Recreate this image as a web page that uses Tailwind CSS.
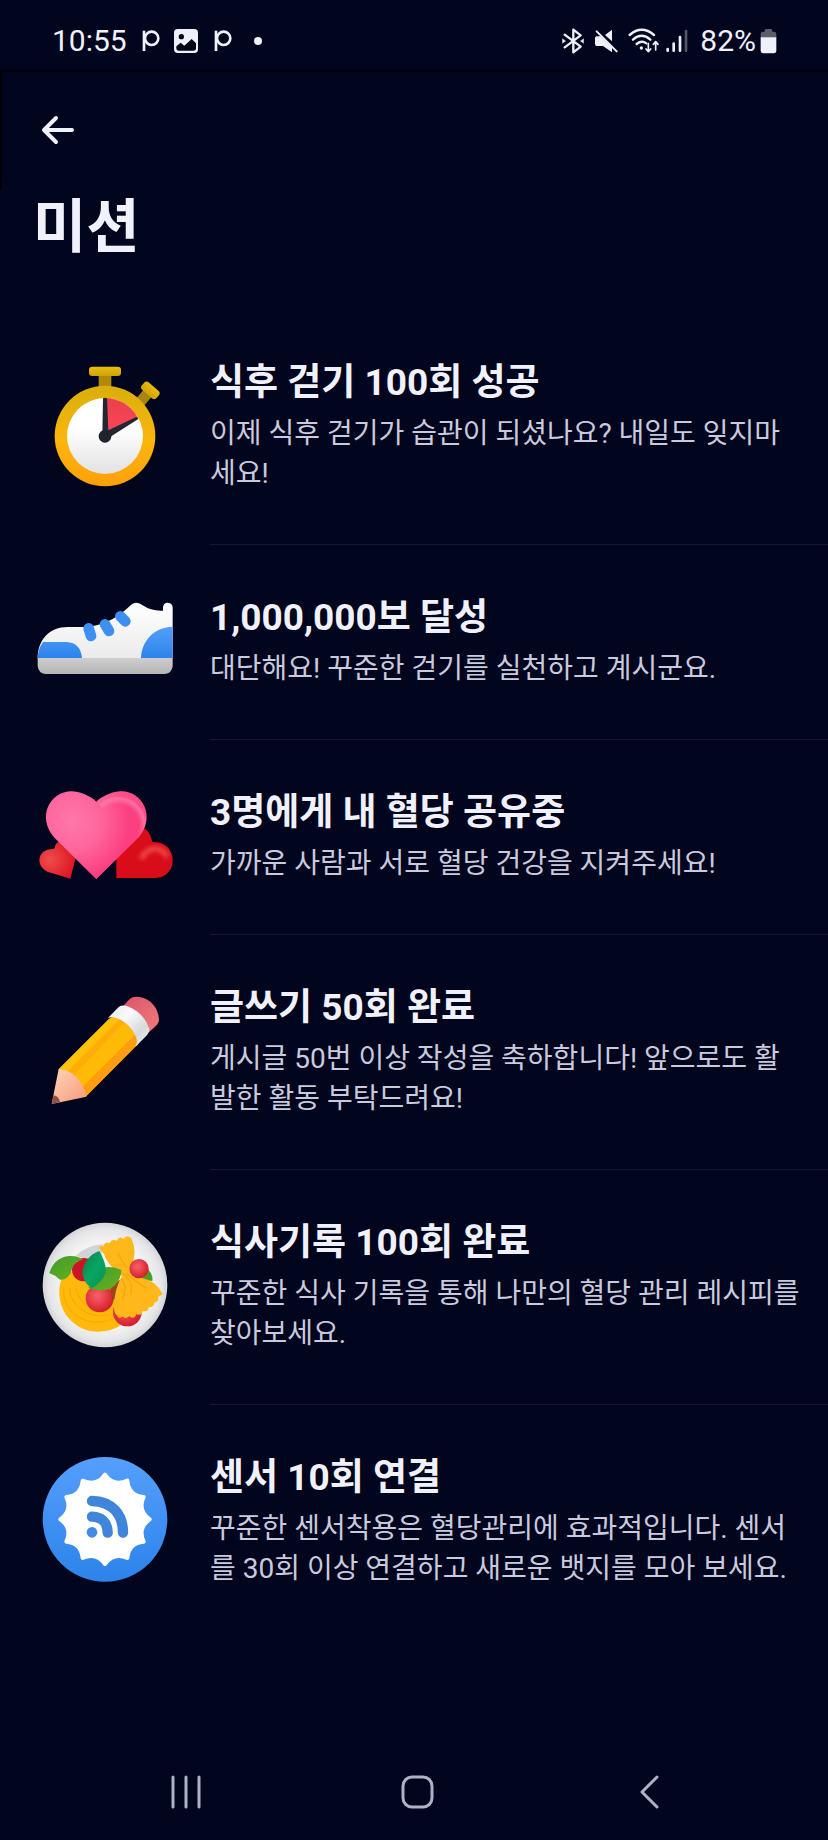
<!DOCTYPE html>
<html lang="ko">
<head>
<meta charset="utf-8">
<meta name="viewport" content="width=device-width, initial-scale=1">
<title>미션</title>
<script src="https://cdn.jsdelivr.net/npm/@tailwindcss/browser@4"></script>
</head>
<body class="flex min-h-screen flex-col bg-[#01051d] font-['Roboto','Noto_Sans_CJK_KR',sans-serif] text-[#f0f1fb]">

<!-- Status bar -->
<div class="flex h-[72px] items-center justify-between border-b-2 border-[#000009] bg-[#01051d] pt-3 pr-[51px] pl-[52px]">
  <div class="flex items-center">
    <span class="w-[90px] text-[30px] leading-8">10:55</span>
    <svg class="h-6 w-[18px]" viewBox="0 0 54 72" fill="none" stroke="#eef0fa" stroke-width="8"><path d="M6 5V66"/><circle cx="29" cy="28" r="20"/></svg>
    <svg class="ml-3.5 size-6" viewBox="0 0 72 72"><rect width="72" height="72" rx="11" fill="#eef0fa"/><path d="M7 52L20 41L31 50L53 30L66 43V57Q66 65 58 65H15Q7 65 7 57Z" fill="#000619"/><circle cx="22" cy="23" r="8" fill="#000619"/></svg>
    <svg class="ml-4 h-6 w-[18px]" viewBox="0 0 54 72" fill="none" stroke="#eef0fa" stroke-width="8"><path d="M6 5V66"/><circle cx="29" cy="28" r="20"/></svg>
    <span class="ml-[22px] size-2 rounded-full bg-[#eef0fa]"></span>
  </div>
  <div class="flex items-center">
    <svg class="h-[26px] w-[22px]" viewBox="0 0 66 78" fill="none" stroke="#eef0fa" stroke-width="7" stroke-linejoin="round" stroke-linecap="round"><path d="M8 20L56 56L34 73V5L56 22L8 58"/><path d="M1 32L11 39L1 46ZM65 32L55 39L65 46Z" fill="#eef0fa" stroke-width="1"/></svg>
    <svg class="ml-[11px] h-6 w-[23px]" viewBox="0 0 69 72"><path d="M0 27Q0 22 5 22H17L51 55V70L24 51H5Q0 51 0 45ZM30 18L51 2V37Z" fill="#eef0fa"/><path d="M5 7L65 67" stroke="#eef0fa" stroke-width="6" stroke-linecap="round"/></svg>
    <svg class="ml-2.5 h-[26px] w-8" viewBox="0 0 96 78" fill="none" stroke="#eef0fa" stroke-width="7" stroke-linecap="round"><path d="M5 21Q41 -10 78 21M15 35Q41 12 67 35M26 48Q41 36 55 46"/><circle cx="40" cy="60" r="5" fill="#eef0fa" stroke="none"/><path d="M61 46V70M54 63L61 71L68 63M83 66V42M76 49L83 41L90 49" stroke-width="5" stroke-linejoin="round"/></svg>
    <svg class="ml-1.5 h-6 w-[22px]" viewBox="0 0 66 72" fill="none" stroke="#eef0fa" stroke-width="8" stroke-linecap="round"><path d="M5 60V65M23 44V65M42 24V65"/><path d="M60 6V65" stroke="#545769"/></svg>
    <span class="ml-3 text-[30px] leading-8">82%</span>
    <svg class="ml-1 h-[26px] w-[17px]" viewBox="0 0 51 78"><path d="M14 8Q14 3 19 3H32Q37 3 37 8V11H42Q49 11 49 19V29H2V19Q2 11 9 11H14Z" fill="#5b5d6d"/><path d="M2 28H49V67Q49 76 41 76H10Q2 76 2 67Z" fill="#eef0fa"/></svg>
  </div>
</div>

<header>
  <nav class="flex h-[118px] items-center border-l-2 border-[#000009] pl-8">
    <button type="button" aria-label="뒤로" class="flex size-12 items-center justify-center">
      <svg class="size-9" viewBox="0 0 36 36" fill="none" stroke="#f0f1fb" stroke-width="4" stroke-linecap="round" stroke-linejoin="round"><path d="M32 17H4M16 5L4 17L16 29"/></svg>
    </button>
  </nav>
  <h1 class="px-[33px] text-[58px] leading-[74px] font-bold">미션</h1>
</header>

<main class="mt-[46px] flex-1">
  <ul>
    <li class="flex items-center gap-[35px] pl-[35px]">
      <svg class="h-[126px] w-[140px] shrink-0 overflow-visible" viewBox="45 76 420 378">
        <defs>
          <linearGradient id="ring" x1="0" y1="0" x2="0" y2="1"><stop stop-color="#d9ae0c"/><stop offset=".55" stop-color="#fbb60b"/><stop offset="1" stop-color="#ff9f0a"/></linearGradient>
          <linearGradient id="cap" x1="0" y1="0" x2="0" y2="1"><stop stop-color="#edbd08"/><stop offset="1" stop-color="#cda20a"/></linearGradient>
          <linearGradient id="face" x1="0" y1="0" x2="0" y2="1"><stop offset=".4" stop-color="#fff"/><stop offset="1" stop-color="#e2e2e2"/></linearGradient>
          <linearGradient id="slice" x1="0" y1="0" x2="0" y2="1"><stop stop-color="#e8414b"/><stop offset="1" stop-color="#ff4558"/></linearGradient>
        </defs>
        <rect x="236" y="100" width="38" height="48" fill="#b28a0b"/>
        <rect x="207" y="81" width="96" height="28" rx="10" fill="url(#cap)"/>
        <g transform="rotate(41 391 152)"><rect x="375" y="162" width="32" height="40" fill="#a98410"/><rect x="362" y="137" width="58" height="30" rx="10" fill="url(#cap)"/></g>
        <circle cx="255" cy="289" r="151" fill="url(#ring)"/>
        <circle cx="255" cy="289" r="114" fill="url(#face)"/>
        <path d="M255 289V175A114 114 0 0 1 354 234Z" fill="url(#slice)"/>
        <path d="M249 176Q255 173 261 176L265 272L347 233Q354 232 355 238L270 292L247 286Z" fill="#242731"/>
        <circle cx="255" cy="290" r="19" fill="#20232c"/>
      </svg>
      <div class="flex-1 border-b border-[#15192f] pt-[49px] pr-7 pb-[50px]">
        <h2 class="text-[37px] leading-12 font-bold">식후 걷기 100회 성공</h2>
        <p class="mt-[7px] text-[28px] leading-10 text-[#c9cade]">이제 식후 걷기가 습관이 되셨나요? 내일도 잊지마세요!</p>
      </div>
    </li>

    <li class="flex items-center gap-[35px] pl-[35px]">
      <svg class="h-[126px] w-[140px] shrink-0 overflow-visible" viewBox="45 33 420 378">
        <defs>
          <linearGradient id="upper" x1="0" y1="0" x2="0" y2="1"><stop stop-color="#fff"/><stop offset="1" stop-color="#ebebed"/></linearGradient>
          <linearGradient id="sole" x1="0" y1="0" x2="0" y2="1"><stop stop-color="#cecece"/><stop offset="1" stop-color="#b4b4b4"/></linearGradient>
          <linearGradient id="blue" x1="0" y1="0" x2="0" y2="1"><stop stop-color="#559ffc"/><stop offset="1" stop-color="#2c83ea"/></linearGradient>
        </defs>
        <path d="M53 268C53 213 88 174 143 174H190Q265 172 327 113Q347 92 368 109Q394 127 429 125V115Q430 101 443 101Q458 102 458 116V268Z" fill="url(#upper)"/>
        <path d="M53 268Q54 240 69 219H140Q182 221 186 268ZM363 268C365 213 405 174 458 173V268Z" fill="url(#blue)"/>
        <path d="M53 267H458V291Q456 312 435 315H76Q55 312 53 291Z" fill="url(#sole)"/>
        <g stroke="#3c90f4" stroke-width="32" stroke-linecap="round"><path d="M206 178L213 201M255 166L267 186M301 142L316 157"/></g>
      </svg>
      <div class="flex-1 border-b border-[#15192f] pt-[49px] pr-7 pb-[50px]">
        <h2 class="text-[37px] leading-12 font-bold">1,000,000보 달성</h2>
        <p class="mt-[7px] text-[28px] leading-10 text-[#c9cade]">대단해요! 꾸준한 걷기를 실천하고 계시군요.</p>
      </div>
    </li>

    <li class="flex items-center gap-[35px] pl-[35px]">
      <svg class="h-[126px] w-[140px] shrink-0 overflow-visible" viewBox="45 15 420 378">
        <defs>
          <radialGradient id="pink" gradientUnits="userSpaceOnUse" cx="155" cy="155" r="175"><stop stop-color="#ff77a8"/><stop offset=".5" stop-color="#ff659c"/><stop offset="1" stop-color="#fb3f80"/></radialGradient>
          <radialGradient id="pinkShine" gradientUnits="userSpaceOnUse" cx="294" cy="166" r="88"><stop offset=".72" stop-color="#ff8ab0" stop-opacity="0"/><stop offset=".92" stop-color="#fb7da9" stop-opacity=".8"/><stop offset="1" stop-color="#ff6f9f" stop-opacity=".3"/></radialGradient>
          <radialGradient id="redSmall" gradientUnits="userSpaceOnUse" cx="90" cy="268" r="75"><stop stop-color="#f04c4d"/><stop offset="1" stop-color="#dc1721"/></radialGradient>
          <filter id="soft" x="-50%" y="-50%" width="200%" height="200%"><feGaussianBlur stdDeviation="7"/></filter>
        </defs>
        <path d="M151 326L82 305C43 284 55 237 98 237Q106 237 105 228C120 196 166 205 170 253Z" fill="url(#redSmall)"/>
        <path d="M289 324V220C289 150 387 144 397 216C472 210 481 318 408 324Z" fill="#d90d19"/>
        <path d="M366 262Q382 235 408 236Q430 238 438 256" fill="none" stroke="#ee4a4a" stroke-width="15" stroke-linecap="round" filter="url(#soft)"/>
        <path d="M229 328L104 204C39 132 106 35 192 72Q216 82 229 95Q242 82 266 72C352 35 419 132 354 204Z" fill="url(#pink)"/>
        <path d="M229 95Q242 82 266 72C352 35 419 132 354 204L294 166L229 95Z" fill="url(#pinkShine)"/>
      </svg>
      <div class="flex-1 border-b border-[#15192f] pt-[49px] pr-7 pb-[50px]">
        <h2 class="text-[37px] leading-12 font-bold">3명에게 내 혈당 공유중</h2>
        <p class="mt-[7px] text-[28px] leading-10 text-[#c9cade]">가까운 사람과 서로 혈당 건강을 지켜주세요!</p>
      </div>
    </li>

    <li class="flex items-center gap-[35px] pl-[35px]">
      <svg class="h-[126px] w-[140px] shrink-0 overflow-visible" viewBox="45 60 420 378">
        <defs>
          <linearGradient id="eraser" x1="0" y1="0" x2="1" y2="1"><stop stop-color="#d95669"/><stop offset="1" stop-color="#f17a7d"/></linearGradient>
          <linearGradient id="band" x1="0" y1="0" x2="1" y2="1"><stop stop-color="#e4e7e9"/><stop offset=".35" stop-color="#fafafa"/><stop offset=".7" stop-color="#d5dadd"/><stop offset="1" stop-color="#f5f5f5"/></linearGradient>
          <linearGradient id="wood" x1="0" y1="0" x2="1" y2="1"><stop stop-color="#ffd3bc"/><stop offset="1" stop-color="#f79a78"/></linearGradient>
        </defs>
        <path d="M309 109L329 87Q343 75 371 84Q414 102 417 150Q417 157 411 164L387 187Z" fill="url(#eraser)"/>
        <path d="M116 298L267 147L300 130L350 190L354 222L196 381Z" fill="#ffba05"/>
        <path d="M116 298L267 147L291 130L311 136L138 309Z" fill="#ffc008"/>
        <path d="M138 309L301 146L319 151L156 322Z" fill="#ffac08"/>
        <path d="M185 353L348 191L354 222L196 381Z" fill="#ff9d10"/>
        <path d="M264 144L296 111Q306 104 321 108Q373 128 388 177Q389 187 382 194L346 231Q354 216 348 201Q327 152 277 141Z" fill="url(#band)"/>
        <path d="M116 297Q175 300 200 378L196 381L95 402Z" fill="url(#wood)"/>
        <path d="M101 376Q117 379 120 396L95 402Z" fill="#914f46"/>
      </svg>
      <div class="flex-1 border-b border-[#15192f] pt-[49px] pr-7 pb-[50px]">
        <h2 class="text-[37px] leading-12 font-bold">글쓰기 50회 완료</h2>
        <p class="mt-[7px] text-[28px] leading-10 text-[#c9cade]">게시글 50번 이상 작성을 축하합니다! 앞으로도 활발한 활동 부탁드려요!</p>
      </div>
    </li>

    <li class="flex items-center gap-[35px] pl-[35px]">
      <svg class="h-[126px] w-[140px] shrink-0 overflow-visible" viewBox="45 74 420 378">
        <defs>
          <radialGradient id="plate"><stop offset=".7" stop-color="#f3f3f3"/><stop offset=".9" stop-color="#e6e6e8"/><stop offset="1" stop-color="#d4d4d6"/></radialGradient>
          <radialGradient id="tomato" cx=".42" cy=".4" r=".6"><stop stop-color="#fa6268"/><stop offset="1" stop-color="#d3202c"/></radialGradient>
          <linearGradient id="leaf" x1="0" y1="0" x2="1" y2="1"><stop stop-color="#3f9d2d"/><stop offset="1" stop-color="#6ab01d"/></linearGradient>
          <linearGradient id="basil" x1="0" y1="0" x2="1" y2="1"><stop stop-color="#087d43"/><stop offset=".5" stop-color="#08a564"/><stop offset="1" stop-color="#07914f"/></linearGradient>
        </defs>
        <circle cx="255" cy="254" r="187" fill="url(#plate)"/>
        <path d="M168 166Q200 134 250 132L240 190Z" fill="#d2d3d8"/>
        <path d="M380 204Q400 220 397 242L365 238Z" fill="#4c9e27"/>
        <path d="M145 211C110 232 108 310 145 352C188 403 254 403 300 376L278 250L190 225Z" fill="#ffb90b"/>
        <g fill="none" stroke="#fbab08" stroke-width="4"><path d="M131 260C127 340 198 385 278 357M149 260C148 315 205 359 270 342M168 262C173 302 208 332 255 335"/></g>
        <circle cx="322" cy="335" r="43" fill="url(#tomato)"/>
        <circle cx="191" cy="208" r="35" fill="#c91525"/>
        <path d="M88 218Q102 172 148 167Q174 166 188 177Q157 188 154 214Q142 240 120 238Q105 224 88 218Z" fill="url(#leaf)"/>
        <circle cx="239" cy="294" r="42" fill="url(#tomato)"/>
        <path d="M270 258L300 238L294 290L278 300Z" fill="#9d4419"/>
        <path d="M237 142Q242 133 251 138Q254 122 270 129Q273 115 291 121Q297 105 310 116Q322 100 334 114Q356 160 328 207Q335 230 366 234Q408 240 428 282L414 290Q419 304 403 306Q404 321 386 321Q385 336 368 332Q364 349 349 341Q343 359 328 348Q314 359 308 348Q296 360 291 345Q281 340 282 317Q284 263 306 227Q262 194 252 161Z" fill="#ffb719"/>
        <path d="M308 218Q343 245 332 280M318 217Q356 253 382 264M303 235Q325 260 306 300M294 157Q307 187 321 202" fill="none" stroke="#f8a610" stroke-width="4"/>
        <circle cx="357" cy="205" r="29" fill="url(#tomato)"/>
        <path d="M205 263Q234 203 258 201Q281 198 304 209Q304 233 286 254Q259 281 205 263Z" fill="url(#leaf)"/>
        <path d="M238 152Q194 168 187 216Q190 249 216 264Q250 242 257 216Q260 190 238 152Z" fill="url(#basil)"/>
      </svg>
      <div class="flex-1 border-b border-[#15192f] pt-[49px] pr-7 pb-[50px]">
        <h2 class="text-[37px] leading-12 font-bold">식사기록 100회 완료</h2>
        <p class="mt-[7px] text-[28px] leading-10 text-[#c9cade]">꾸준한 식사 기록을 통해 나만의 혈당 관리 레시피를 찾아보세요.</p>
      </div>
    </li>

    <li class="flex items-center gap-[35px] pl-[35px]">
      <svg class="h-[126px] w-[140px] shrink-0 overflow-visible" viewBox="45 57 420 378">
        <circle cx="255" cy="238" r="187" fill="url(#blue)"/>
        <path transform="translate(255 238)" fill="#fff" stroke="#fff" stroke-width="12" stroke-linejoin="round" d="M0-134Q26-97 67-116Q71-71 116-67Q97-26 134 0Q97 26 116 67Q71 71 67 116Q26 97 0 134Q-26 97-67 116Q-71 71-116 67Q-97 26-134 0Q-97-26-116-67Q-71-71-67-116Q-26-97 0-134Z"/>
        <circle cx="216" cy="277" r="16" fill="#3f8ce6"/>
        <g fill="none" stroke="#3f86da" stroke-width="31" stroke-linecap="round"><path d="M216 230Q262 232 263 278M216 183C275 185 309 221 309 278"/></g>
      </svg>
      <div class="flex-1 pt-[49px] pr-7 pb-[50px]">
        <h2 class="text-[37px] leading-12 font-bold">센서 10회 연결</h2>
        <p class="mt-[7px] text-[28px] leading-10 text-[#c9cade]">꾸준한 센서착용은 혈당관리에 효과적입니다. 센서를 30회 이상 연결하고 새로운 뱃지를 모아 보세요.</p>
      </div>
    </li>
  </ul>
</main>

<!-- System navigation -->
<nav class="flex h-24 items-center justify-around pr-[65px] pl-[71px]">
  <button type="button" aria-label="최근 앱" class="flex size-16 items-center justify-center"><svg class="size-9" viewBox="0 0 36 36" stroke="#afb2c7" stroke-width="3" stroke-linecap="round"><path d="M5 3V33M18 3V33M31 3V33"/></svg></button>
  <button type="button" aria-label="홈" class="flex size-16 items-center justify-center"><svg class="size-9" viewBox="0 0 36 36" fill="none" stroke="#afb2c7" stroke-width="3"><rect x="4" y="3" width="29" height="30" rx="9"/></svg></button>
  <button type="button" aria-label="이전" class="flex size-16 items-center justify-center"><svg class="size-9" viewBox="0 0 36 36" fill="none" stroke="#afb2c7" stroke-width="3" stroke-linecap="round" stroke-linejoin="round"><path d="M27 3L12 18L27 33"/></svg></button>
</nav>
</body>
</html>
